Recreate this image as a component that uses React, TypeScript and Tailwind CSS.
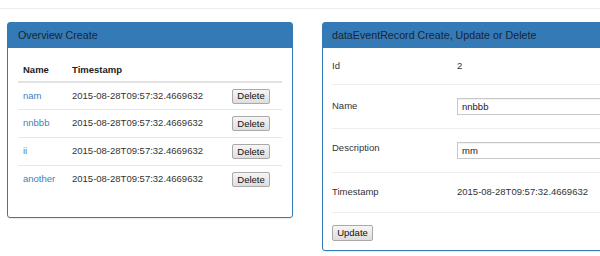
import React from "react";

interface DataEventRecord {
  id: number;
  name: string;
  timestamp: string;
}

const records: DataEventRecord[] = [
  { id: 1, name: "nam", timestamp: "2015-08-28T09:57:32.4669632" },
  { id: 2, name: "nnbbb", timestamp: "2015-08-28T09:57:32.4669632" },
  { id: 3, name: "ii", timestamp: "2015-08-28T09:57:32.4669632" },
  { id: 4, name: "another", timestamp: "2015-08-28T09:57:32.4669632" },
];

const NativeButton = ({ label, className }: { label: string; className: string }) => (
  <button
    className={`box-border flex shrink-0 items-center justify-center rounded-[2px] border border-[#a9a9a9] bg-gradient-to-b from-[#f6f6f6] to-[#dedede] p-0 text-[9.5px] leading-none text-[#111] ${className}`}
  >
    {label}
  </button>
);

const App = () => {
  const selected = records[1];

  return (
    <div
      className="h-[256px] w-[600px] overflow-hidden bg-white text-[9.5px] text-[#333]"
      style={{ fontFamily: '"Liberation Sans", Arial, sans-serif' }}
    >
      <div className="h-[9px] border-b border-[#ececec]" />

      <div className="mt-[13px] flex items-start">
        {/* Overview */}
        <div className="ml-[7px] w-[286px] rounded-[3px] border border-[#337ab7] shadow-[0_1px_1px_rgba(0,0,0,0.08)]">
          <div className="flex h-[25px] items-center bg-[#337ab7] px-[10px] text-[10.7px] text-[#1c2430]">
            Overview Create
          </div>
          <div className="px-[10px] pb-[24px] pt-[10px]">
            <div className="w-[264px]">
              <div className="flex h-[25px] items-center border-b-2 border-[#e3e3e3] pt-[1px] font-bold text-[#222]">
                <span className="w-[49px] pl-[5px]">Name</span>
                <span className="w-[160px] pl-[5px]">Timestamp</span>
              </div>
              {records.map((rec, i) => (
                <div
                  key={rec.id}
                  className={`flex items-center ${i > 0 ? "h-[28px] border-t border-[#e8e8e8]" : "h-[26px]"}`}
                >
                  <span className="w-[49px] pl-[5px] text-[#3b7fc0]">{rec.name}</span>
                  <span className="w-[160px] pl-[5px]">{rec.timestamp}</span>
                  <div className="pl-[5px]">
                    <NativeButton label="Delete" className="h-[15px] w-[38px]" />
                  </div>
                </div>
              ))}
            </div>
          </div>
        </div>

        {/* Edit */}
        <div className="ml-[29px] w-[420px] shrink-0 rounded-[3px] border border-[#337ab7] shadow-[0_1px_1px_rgba(0,0,0,0.08)]">
          <div className="flex h-[25px] items-center bg-[#337ab7] px-[9px] text-[10.7px] text-[#1c2430]">
            dataEventRecord Create, Update or Delete
          </div>
          <div className="px-[9px]">
            <div className="flex h-[37px] items-center border-b border-[#eee]">
              <span className="w-[125px]">Id</span>
              <span>{selected.id}</span>
            </div>
            <div className="flex h-[44px] items-center border-b border-[#eee]">
              <span className="w-[125px]">Name</span>
              <input
                readOnly
                value={selected.name}
                className="h-[17px] flex-1 border border-[#c8c8c8] px-[4px] text-[9.5px] text-[#222] shadow-[inset_0_1px_1px_rgba(0,0,0,0.06)] outline-none"
              />
            </div>
            <div className="flex h-[44px] items-center border-b border-[#eee]">
              <span className="-mt-[4px] w-[125px]">Description</span>
              <input
                readOnly
                value="mm"
                className="h-[17px] flex-1 border border-[#c8c8c8] px-[4px] text-[9.5px] text-[#222] shadow-[inset_0_1px_1px_rgba(0,0,0,0.06)] outline-none"
              />
            </div>
            <div className="flex h-[40px] items-center border-b border-[#eee]">
              <span className="w-[125px]">Timestamp</span>
              <span>{selected.timestamp}</span>
            </div>
            <div className="flex pb-[9px] pt-[12px]">
              <NativeButton label="Update" className="h-[16px] w-[41px]" />
            </div>
          </div>
        </div>
      </div>
    </div>
  );
};

export default App;
